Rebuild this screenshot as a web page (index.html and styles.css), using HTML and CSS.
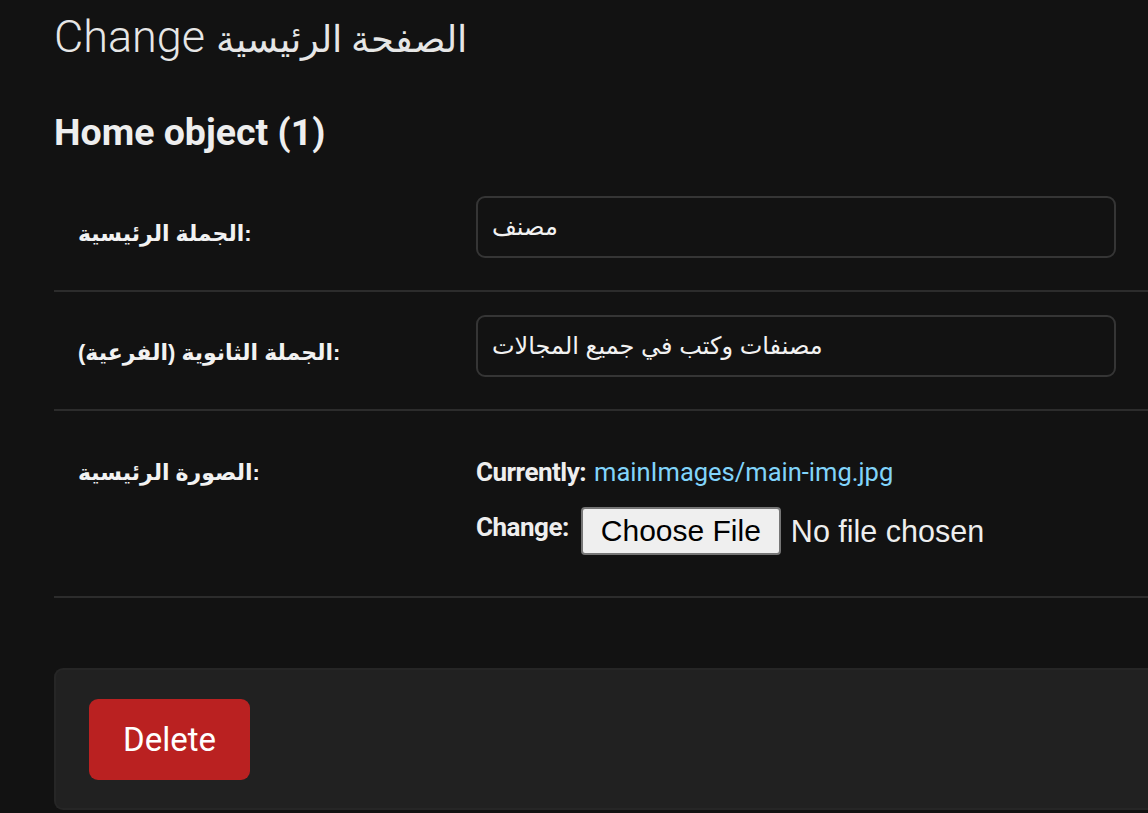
FILE: index.html
```html
<!DOCTYPE html>
<html lang="en">
<head>
<meta charset="utf-8">
<title>Change الصفحة الرئيسية</title>
<link rel="stylesheet" href="styles.css">
</head>
<body>
<div class="content">
  <h1 class="title">Change <span class="title-ar">الصفحة الرئيسية</span></h1>
  <h2 class="subtitle">Home object (1)</h2>
  <form class="form">
    <div class="form-row">
      <label class="label" for="f1">الجملة الرئيسية:</label>
      <input class="text-input" id="f1" type="text" value="مصنف">
    </div>
    <div class="form-row">
      <label class="label" for="f2">الجملة الثانوية (الفرعية):</label>
      <input class="text-input" id="f2" type="text" value="مصنفات وكتب في جميع المجالات">
    </div>
    <div class="form-row form-row-file">
      <label class="label">الصورة الرئيسية:</label>
      <div class="file-upload">
        <p class="file-line"><span class="file-key">Currently:</span> <a class="file-link" href="#">mainImages/main-img.jpg</a></p>
        <p class="file-line file-change"><span class="file-key">Change:</span> <span class="file-btn">Choose File</span><span class="file-none">No file chosen</span></p>
      </div>
    </div>
    <div class="submit-row">
      <a class="delete-btn" href="#">Delete</a>
    </div>
  </form>
</div>
</body>
</html>
```
FILE: styles.css
```css
html, body {
  margin: 0;
  padding: 0;
  background: #121212;
  overflow: hidden;
}
body {
  color: #eeeeee;
  font-family: Roboto, "Liberation Sans", "DejaVu Sans", sans-serif;
}
.content {
  width: 1220px;
  padding-left: 54px;
}
.title {
  margin: 10px 0 0;
  font-size: 45px;
  line-height: 54px;
  font-weight: 300;
  color: #e6e6e6;
  white-space: nowrap;
}
.title-ar {
  font-size: 37px;
}
.subtitle {
  margin: 41px 0 0;
  font-size: 37.5px;
  line-height: 48px;
  font-weight: 700;
  color: #eeeeee;
}
.form {
  margin-top: 17px;
}
.form-row {
  display: flex;
  align-items: center;
  padding: 23px 0 32px;
  border-bottom: 2px solid #2c2c2c;
}
.label {
  width: 422px;
  padding-left: 24px;
  padding-top: 14px;
  box-sizing: border-box;
  font-family: "Liberation Sans", "DejaVu Sans", sans-serif;
  font-weight: 700;
  font-size: 22px;
  color: #f2f2f2;
}
.text-input {
  width: 640px;
  height: 62px;
  box-sizing: border-box;
  background: #121212;
  border: 2px solid #353535;
  border-radius: 9px;
  color: #f2f2f2;
  font-family: "Liberation Sans", "DejaVu Sans", sans-serif;
  font-size: 24px;
  padding: 0 14px;
  outline: none;
}
.form-row-file {
  align-items: flex-start;
  padding: 46px 0 41px;
}
.form-row-file .label {
  padding-top: 3px;
}
.file-upload {
  display: flex;
  flex-direction: column;
  gap: 31px;
}
.file-line {
  margin: 0;
  display: flex;
  align-items: center;
  font-size: 25px;
}
.file-key {
  font-weight: 700;
  font-size: 26px;
  letter-spacing: -0.5px;
  color: #eeeeee;
  margin-right: 8px;
}
.file-link {
  color: #81d4fa;
  text-decoration: none;
  font-size: 25.5px;
}
.file-change {
  align-items: flex-start;
}
.file-change .file-key {
  margin-right: 12px;
  margin-top: -6px;
}
.file-btn {
  display: inline-block;
  box-sizing: border-box;
  height: 48px;
  line-height: 44px;
  padding: 0 18px;
  background: #efefef;
  border: 2px solid #767676;
  border-radius: 4px;
  color: #000;
  font-family: "Liberation Sans", sans-serif;
  font-size: 30px;
  margin-top: -11px;
}
.file-none {
  margin-left: 10px;
  margin-top: -11px;
  line-height: 48px;
  font-family: "Liberation Sans", sans-serif;
  font-size: 30.5px;
  color: #eeeeee;
}
.submit-row {
  margin-top: 70px;
  height: 142px;
  box-sizing: border-box;
  background: #212121;
  border: 2px solid #262626;
  border-right: none;
  border-radius: 9px 0 0 9px;
  padding: 29px 0 0 33px;
}
.delete-btn {
  display: inline-flex;
  align-items: center;
  justify-content: center;
  width: 161px;
  height: 81px;
  background: #ba2121;
  border-radius: 9px;
  color: #ffffff;
  text-decoration: none;
  font-size: 33px;
}
```
